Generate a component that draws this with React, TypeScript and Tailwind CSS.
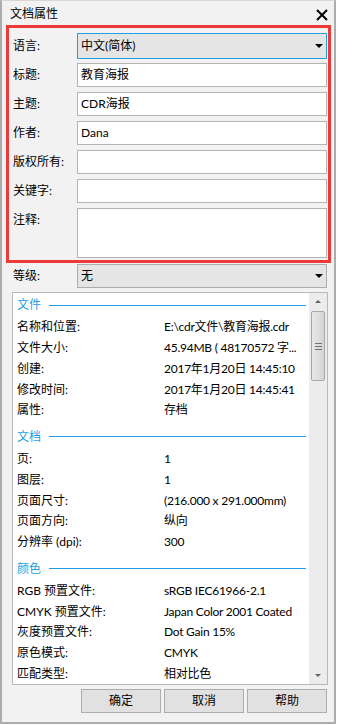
import React from "react";

const Row = ({ label, value }: { label: string; value: string }) => (
  <div className="flex h-[20.75px] items-center">
    <div className="w-[147px] shrink-0 whitespace-nowrap">{label}</div>
    <div className="flex-1 whitespace-nowrap tracking-[-0.25px]">{value}</div>
  </div>
);

const Section = ({ title, first, children }: { title: string; first?: boolean; children: React.ReactNode }) => (
  <div className={first ? "" : "mt-[4px]"}>
    <div className="flex h-[24px] items-center pr-[3px]">
      <span className="text-[#1e9de2]">{title}</span>
      <div className="ml-[8px] h-px flex-1 bg-[#1e9de2]" />
    </div>
    {children}
  </div>
);

const Caret = () => (
  <div className="h-0 w-0 border-l-[4px] border-r-[4px] border-t-[4px] border-l-transparent border-r-transparent border-t-black" />
);

export default function App() {
  return (
    <div className="h-[725px] w-[340px] bg-white font-['Lato','Noto_Sans_CJK_SC',sans-serif] text-[12px] leading-none text-black">
      <div className="relative flex h-[724px] w-[336px] flex-col border-2 border-t border-[#acacac] border-t-[#d6d6d6] bg-[#f2f2f2]">
        {/* title bar */}
        <div className="flex h-[26px] items-center justify-between pl-[8px] pr-[6px]">
          <span>文档属性</span>
          <svg width="12" height="12" viewBox="0 0 12 12" className="mt-[1px]">
            <path d="M1 1 L11 11 M11 1 L1 11" stroke="black" strokeWidth="2" />
          </svg>
        </div>

        <div className="flex flex-1 flex-col pl-[11px] pr-[7px] pt-[6px]">
          {/* language */}
          <div className="flex h-[26px] items-center">
            <div className="w-[64px] shrink-0">语言:</div>
            <div className="flex h-full flex-1 items-center justify-between border border-[#1e9fe6] bg-[#e5e5e5] pl-[3px] pr-[3px]">
              <span>中文(简体)</span>
              <Caret />
            </div>
          </div>
          {[
            ["标题:", "教育海报"],
            ["主题:", "CDR海报"],
            ["作者:", "Dana"],
            ["版权所有:", ""],
            ["关键字:", ""],
          ].map(([l, v], i) => (
            <div key={l} className={`flex h-[24px] items-center ${i === 0 ? "mt-[4px]" : "mt-[5px]"}`}>
              <div className="w-[64px] shrink-0 whitespace-nowrap">{l}</div>
              <div className="flex h-full flex-1 items-center border border-[#b4b4b4] bg-white pl-[3px]">{v}</div>
            </div>
          ))}
          <div className="mt-[5px] flex h-[50px]">
            <div className="flex h-[24px] w-[64px] shrink-0 items-center">注释:</div>
            <div className="h-full flex-1 border border-[#b4b4b4] bg-white" />
          </div>

          {/* level */}
          <div className="mt-[6px] flex h-[24px] items-center">
            <div className="w-[64px] shrink-0">等级:</div>
            <div className="flex h-full flex-1 items-center justify-between border border-[#adadad] bg-[#e5e5e5] pl-[3px] pr-[3px]">
              <span>无</span>
              <Caret />
            </div>
          </div>

          {/* info panel */}
          <div className="mx-[-1px] mt-[4px] flex h-[393px] border border-[#b9b9b9] bg-white">
            <div className="flex-1 pl-[4px]">
              <Section title="文件" first>
                <Row label="名称和位置:" value="E:\cdr文件\教育海报.cdr" />
                <Row label="文件大小:" value="45.94MB ( 48170572 字..." />
                <Row label="创建:" value="2017年1月20日 14:45:10" />
                <Row label="修改时间:" value="2017年1月20日 14:45:41" />
                <Row label="属性:" value="存档" />
              </Section>
              <Section title="文档">
                <Row label="页:" value="1" />
                <Row label="图层:" value="1" />
                <Row label="页面尺寸:" value="(216.000 x 291.000mm)" />
                <Row label="页面方向:" value="纵向" />
                <Row label="分辨率 (dpi):" value="300" />
              </Section>
              <Section title="颜色">
                <Row label="RGB 预置文件:" value="sRGB IEC61966-2.1" />
                <Row label="CMYK 预置文件:" value="Japan Color 2001 Coated" />
                <Row label="灰度预置文件:" value="Dot Gain 15%" />
                <Row label="原色模式:" value="CMYK" />
                <Row label="匹配类型:" value="相对比色" />
              </Section>
            </div>
            {/* scrollbar */}
            <div className="flex w-[18px] shrink-0 flex-col bg-[#ececec]">
              <div className="flex h-[17px] items-center justify-center">
                <div className="h-0 w-0 border-b-[3px] border-l-[3px] border-r-[3px] border-b-[#606060] border-l-transparent border-r-transparent" />
              </div>
              <div className="mx-[2px] mt-[1px] flex h-[70px] flex-col items-center justify-center gap-[2px] rounded-[2px] border border-[#a8a8a8] bg-gradient-to-r from-[#e8e8e8] via-[#dedede] to-[#d4d4d4]">
                <div className="h-px w-[7px] bg-[#707070]" />
                <div className="h-px w-[7px] bg-[#707070]" />
                <div className="h-px w-[7px] bg-[#707070]" />
              </div>
              <div className="flex-1" />
              <div className="flex h-[17px] items-center justify-center">
                <div className="h-0 w-0 border-l-[3px] border-r-[3px] border-t-[3px] border-l-transparent border-r-transparent border-t-[#606060]" />
              </div>
            </div>
          </div>

          {/* buttons */}
          <div className="mt-[4px] flex h-[24px] justify-end gap-[3px]">
            {["确定", "取消", "帮助"].map((b) => (
              <div key={b} className="flex w-[80px] items-center justify-center border border-[#adadad] bg-[#e1e1e1]">
                {b}
              </div>
            ))}
          </div>
        </div>

        {/* red annotation overlay */}
        <div className="pointer-events-none absolute left-[4px] top-[24px] h-[238px] w-[325px] border-[3px] border-[#ec3a3a]" />
      </div>
    </div>
  );
}
